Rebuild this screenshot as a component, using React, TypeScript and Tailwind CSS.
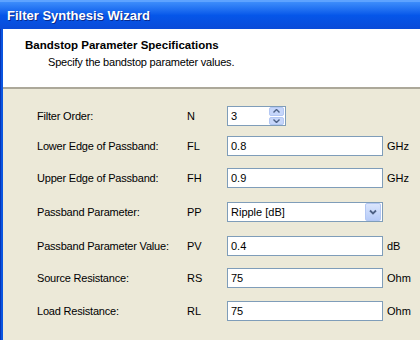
import React from 'react';

const rows = [
  { label: 'Filter Order:', sym: 'N', kind: 'spin', value: '3', unit: '', mt: 'mt-[17px]' },
  { label: 'Lower Edge of Passband:', sym: 'FL', kind: 'text', value: '0.8', unit: 'GHz', mt: 'mt-[10px]' },
  { label: 'Upper Edge of Passband:', sym: 'FH', kind: 'text', value: '0.9', unit: 'GHz', mt: 'mt-[12px]' },
  { label: 'Passband Parameter:', sym: 'PP', kind: 'select', value: 'Ripple [dB]', unit: '', mt: 'mt-[14px]' },
  { label: 'Passband Parameter Value:', sym: 'PV', kind: 'text', value: '0.4', unit: 'dB', mt: 'mt-[14px]' },
  { label: 'Source Resistance:', sym: 'RS', kind: 'text', value: '75', unit: 'Ohm', mt: 'mt-[12px]' },
  { label: 'Load Resistance:', sym: 'RL', kind: 'text', value: '75', unit: 'Ohm', mt: 'mt-[13px]' },
];

const SpinBox = ({ value }: { value: string }) => (
  <div className="w-[59px] h-[20px] border border-[#7f9db9] bg-white flex items-center">
    <span className="flex-1 pl-[3px]">{value}</span>
    <div className="w-[15px] h-[18px] flex flex-col gap-px mr-px">
      <div className="flex-1 rounded-[2px] bg-[#c6d6fa] border border-[#b3c7f3] flex items-center justify-center">
        <svg width="7" height="4" viewBox="0 0 7 4">
          <path d="M0.5 3.5 L3.5 0.5 L6.5 3.5" fill="none" stroke="#4d6185" strokeWidth="1.4" />
        </svg>
      </div>
      <div className="flex-1 rounded-[2px] bg-[#c6d6fa] border border-[#b3c7f3] flex items-center justify-center">
        <svg width="7" height="4" viewBox="0 0 7 4">
          <path d="M0.5 0.5 L3.5 3.5 L6.5 0.5" fill="none" stroke="#4d6185" strokeWidth="1.4" />
        </svg>
      </div>
    </div>
  </div>
);

const Select = ({ value }: { value: string }) => (
  <div className="w-[156px] h-[20px] border border-[#7f9db9] bg-white flex items-center">
    <span className="flex-1 pl-[3px]">{value}</span>
    <div className="w-[16px] h-[18px] mr-px rounded-[2px] bg-gradient-to-b from-[#dbe6fd] to-[#b6cbf8] border border-[#b3c7f3] flex items-center justify-center">
      <svg width="8" height="6" viewBox="0 0 8 6">
        <path d="M1 1.5 L4 4.5 L7 1.5" fill="none" stroke="#4d6185" strokeWidth="1.8" />
      </svg>
    </div>
  </div>
);

const TextBox = ({ value }: { value: string }) => (
  <div className="w-[156px] h-[20px] border border-[#7f9db9] bg-white flex items-center pl-[3px]">
    {value}
  </div>
);

export default function App() {
  return (
    <div className="w-[420px] h-[340px] flex flex-col overflow-hidden font-['Liberation_Sans',Arial,sans-serif] text-[11px] text-black">
      {/* title bar */}
      <div className="h-[29px] shrink-0 flex items-center pl-[7px] bg-gradient-to-b from-[#3d8dfb] via-[#0556e9] to-[#0a4bd8] border-t-[2px] border-[#5ea3ff]">
        <span className="text-white font-bold text-[13px] [text-shadow:1px_1px_0_#0a2a8c]">Filter Synthesis Wizard</span>
      </div>
      <div className="flex flex-1">
        <div className="w-[3px] bg-[#0a55e0] border-l border-[#0735b8]" />
        <div className="flex-1 flex flex-col">
          {/* header */}
          <div className="h-[60px] bg-white border-b-2 border-b-[#aca899] pt-[10px] pl-[22px]">
            <div className="font-bold text-[11.5px] leading-[13px]">Bandstop Parameter Specifications</div>
            <div className="pl-[23px] mt-[4px] leading-[13px] tracking-[-0.2px]">Specify the bandstop parameter values.</div>
          </div>
          {/* body */}
          <div className="flex-1 bg-[#ece9d8] flex flex-col">
            {rows.map((r) => (
              <div key={r.sym} className={`${r.mt} h-[20px] flex items-center whitespace-nowrap`}>
                <span className="w-[184px] shrink-0 pl-[34px] tracking-[-0.2px]">{r.label}</span>
                <span className="w-[40px] shrink-0">{r.sym}</span>
                {r.kind === 'spin' && <SpinBox value={r.value} />}
                {r.kind === 'text' && <TextBox value={r.value} />}
                {r.kind === 'select' && <Select value={r.value} />}
                {r.unit && <span className="ml-[4px]">{r.unit}</span>}
              </div>
            ))}
          </div>
        </div>
      </div>
    </div>
  );
}
